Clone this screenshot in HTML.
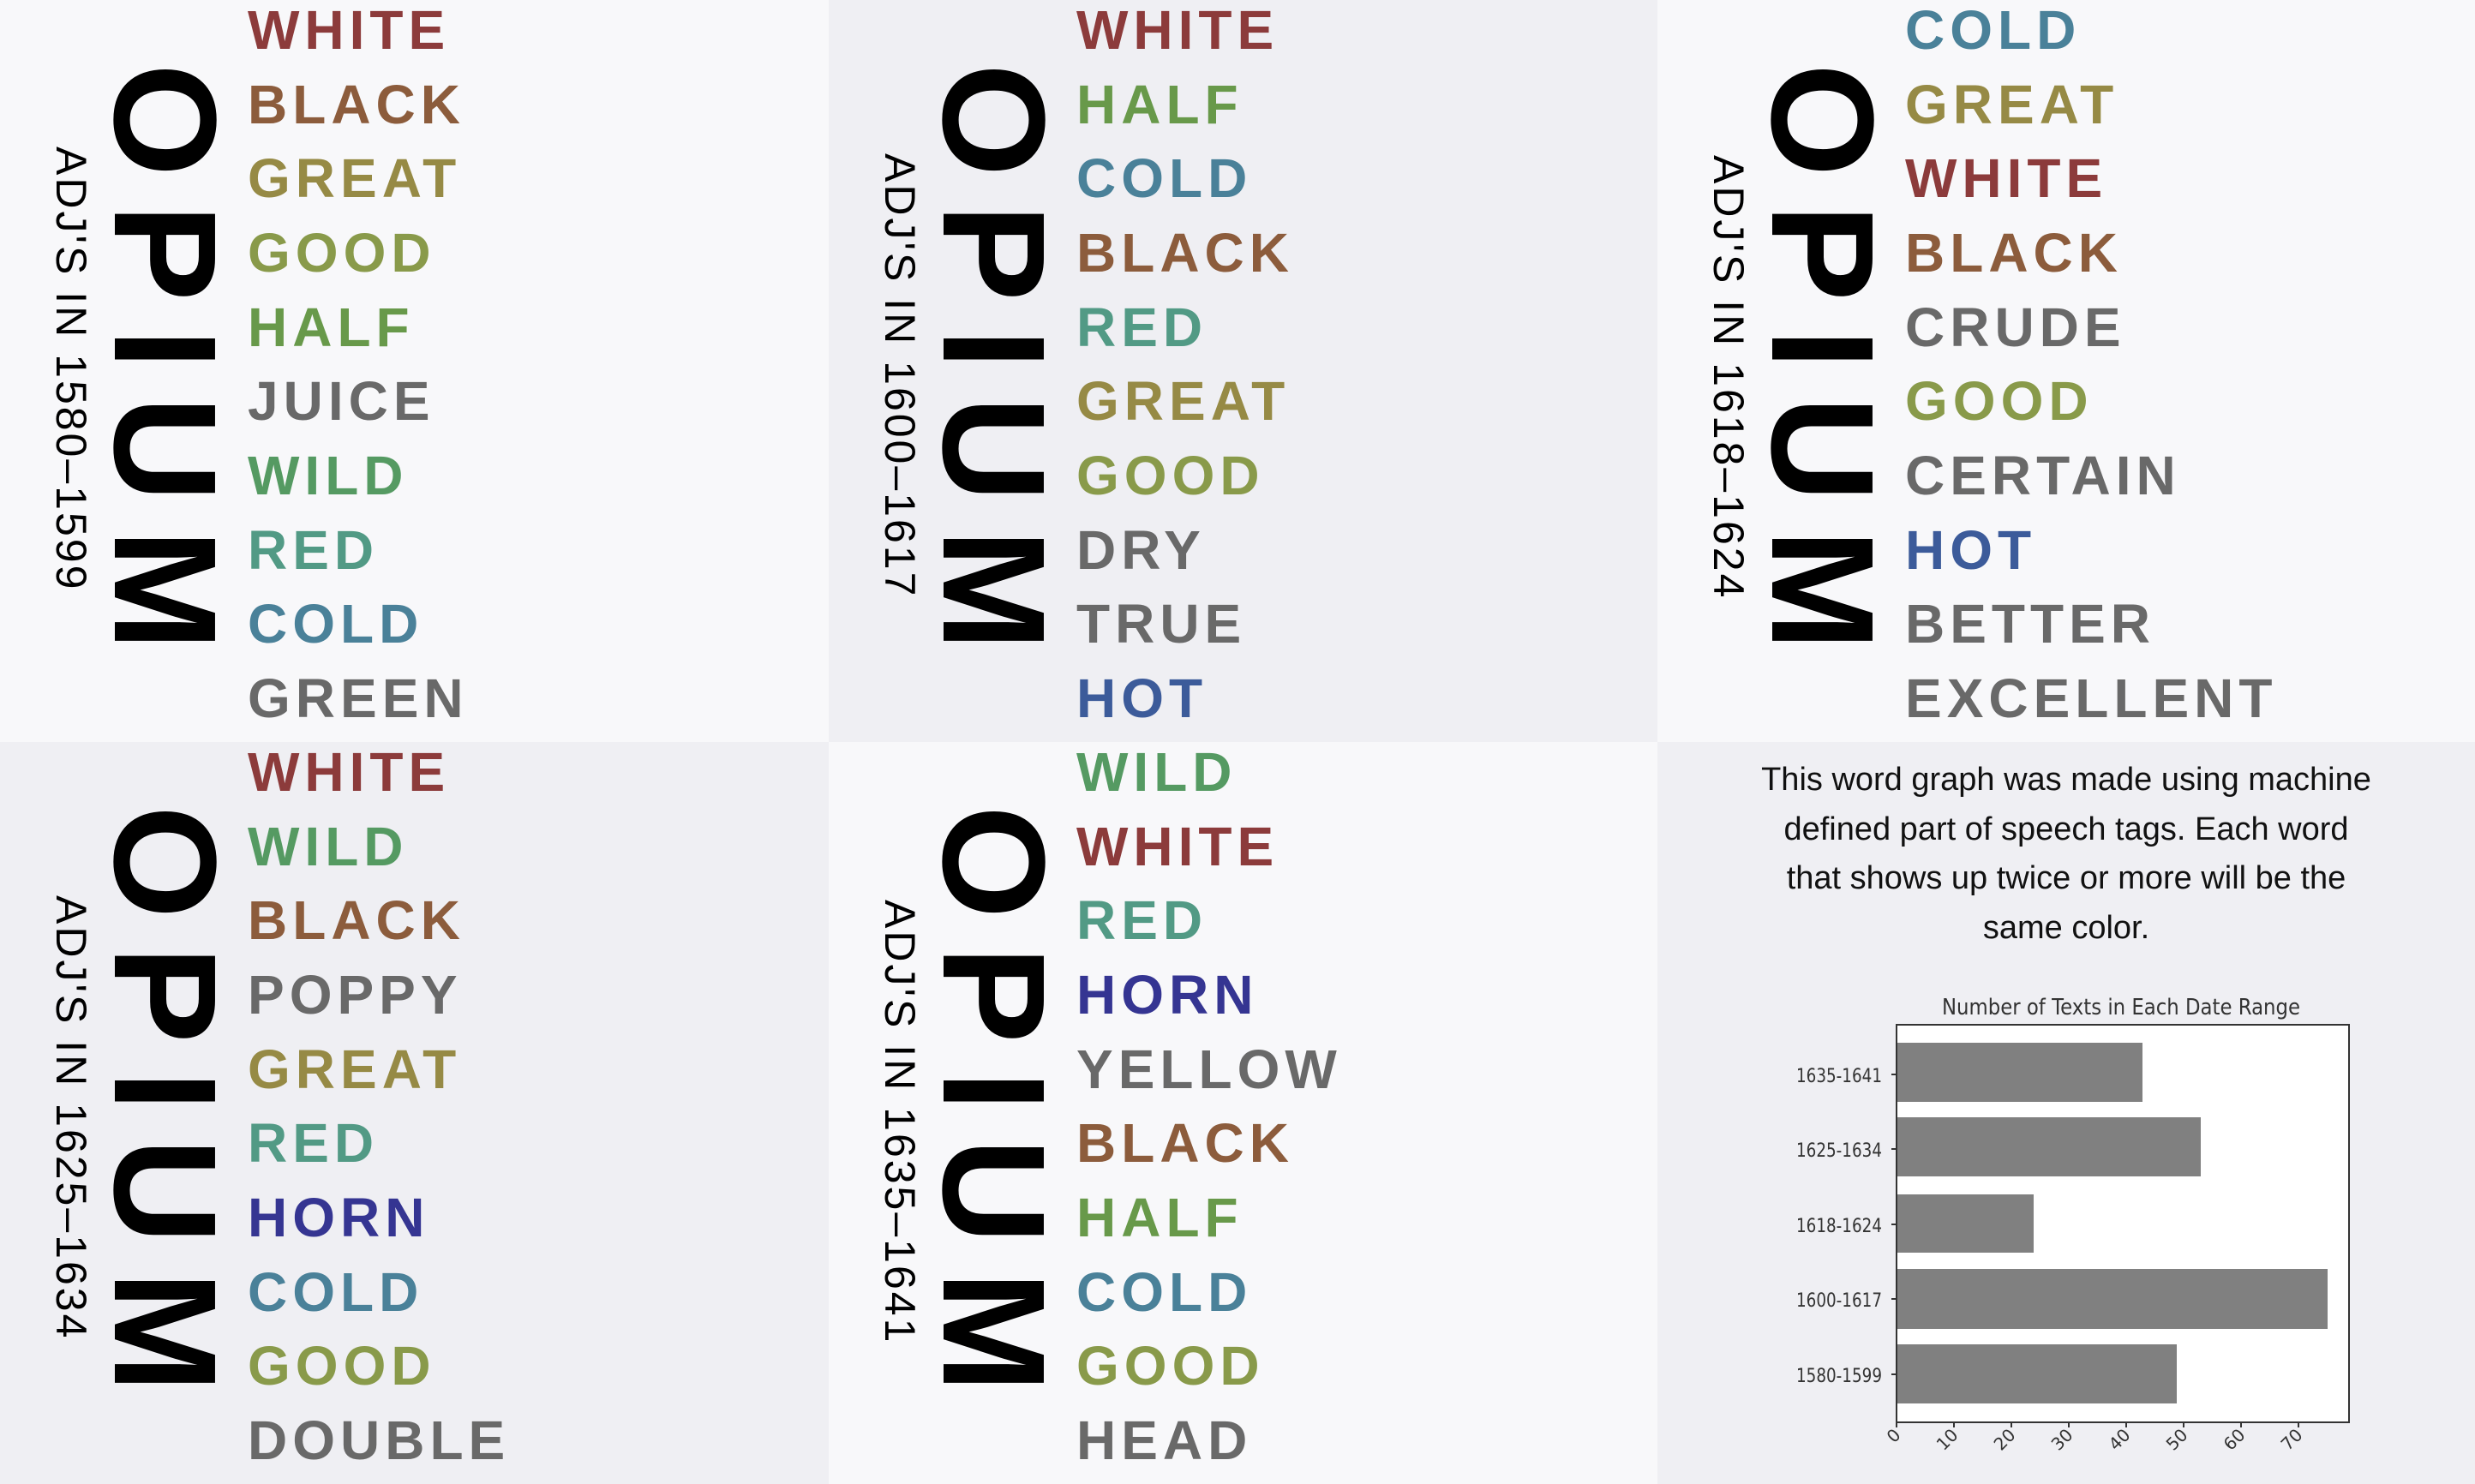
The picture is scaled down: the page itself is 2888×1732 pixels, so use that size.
<!DOCTYPE html>
<html><head><meta charset="utf-8">
<style>
*{margin:0;padding:0;box-sizing:border-box}
body{width:2888px;height:1732px;overflow:hidden;position:relative;background:#f8f8fa;font-family:"Liberation Sans",sans-serif}
.p{position:absolute;width:967px;height:866px;overflow:hidden}
.a{background:#f8f8fa}.b{background:#efeff3}
.w{position:absolute;left:289px;top:-8px;font-weight:bold;font-size:64px;line-height:86.67px;letter-spacing:6px;white-space:nowrap}
.op{position:absolute;left:277px;top:74px;transform:rotate(90deg);transform-origin:0 0;font-weight:bold;font-size:170px;line-height:170px;letter-spacing:32px;white-space:nowrap;color:#000}
.adj{position:absolute;left:108px;transform:rotate(90deg);transform-origin:0 0;font-size:50px;line-height:50px;letter-spacing:3px;white-space:nowrap;color:#000}
.r{color:#8c3b3b}.k{color:#8c5c3c}.gt{color:#968a45}.gd{color:#899a4a}.h{color:#68994a}.g{color:#696969}.wl{color:#559a62}.rd{color:#529a85}.c{color:#4a8199}.ht{color:#3c5b9a}.hn{color:#353592}
.desc{position:absolute;left:1934px;top:882px;width:954px;text-align:center;font-size:38px;line-height:57.5px;color:#111}
</style></head><body>

<div class="p a" style="left:0;top:0">
<div class="adj" style="top:171px">ADJ'S IN 1580–1599</div>
<div class="op">OPIUM</div>
<div class="w"><div class="r">WHITE</div><div class="k">BLACK</div><div class="gt">GREAT</div><div class="gd">GOOD</div><div class="h">HALF</div><div class="g">JUICE</div><div class="wl">WILD</div><div class="rd">RED</div><div class="c">COLD</div><div class="g">GREEN</div></div>
</div>

<div class="p b" style="left:967px;top:0">
<div class="adj" style="top:179px">ADJ'S IN 1600–1617</div>
<div class="op">OPIUM</div>
<div class="w"><div class="r">WHITE</div><div class="h">HALF</div><div class="c">COLD</div><div class="k">BLACK</div><div class="rd">RED</div><div class="gt">GREAT</div><div class="gd">GOOD</div><div class="g">DRY</div><div class="g">TRUE</div><div class="ht">HOT</div></div>
</div>

<div class="p a" style="left:1934px;top:0;width:954px">
<div class="adj" style="top:181px">ADJ'S IN 1618–1624</div>
<div class="op">OPIUM</div>
<div class="w"><div class="c">COLD</div><div class="gt">GREAT</div><div class="r">WHITE</div><div class="k">BLACK</div><div class="g">CRUDE</div><div class="gd">GOOD</div><div class="g">CERTAIN</div><div class="ht">HOT</div><div class="g">BETTER</div><div class="g">EXCELLENT</div></div>
</div>

<div class="p b" style="left:0;top:866px">
<div class="adj" style="top:179px">ADJ'S IN 1625–1634</div>
<div class="op">OPIUM</div>
<div class="w"><div class="r">WHITE</div><div class="wl">WILD</div><div class="k">BLACK</div><div class="g">POPPY</div><div class="gt">GREAT</div><div class="rd">RED</div><div class="hn">HORN</div><div class="c">COLD</div><div class="gd">GOOD</div><div class="g">DOUBLE</div></div>
</div>

<div class="p a" style="left:967px;top:866px">
<div class="adj" style="top:184px">ADJ'S IN 1635–1641</div>
<div class="op">OPIUM</div>
<div class="w"><div class="wl">WILD</div><div class="r">WHITE</div><div class="rd">RED</div><div class="hn">HORN</div><div class="g">YELLOW</div><div class="k">BLACK</div><div class="h">HALF</div><div class="c">COLD</div><div class="gd">GOOD</div><div class="g">HEAD</div></div>
</div>

<div class="p b" style="left:1934px;top:866px;width:954px"></div>

<div class="desc">This word graph was made using machine<br>defined part of speech tags. Each word<br>that shows up twice or more will be the<br>same color.</div>

<svg style="position:absolute;left:0;top:0" width="2888" height="1732" viewBox="0 0 2888 1732">
<g font-family="DejaVu Sans, sans-serif" fill="#333">
<text x="2475" y="1184" font-size="26" text-anchor="middle" textLength="418" lengthAdjust="spacingAndGlyphs">Number of Texts in Each Date Range</text>
</g>
<rect x="2213" y="1196" width="528" height="464" fill="#fff" stroke="#333" stroke-width="2"/>
<g fill="#808080">
<rect x="2214" y="1217" width="286" height="69"/>
<rect x="2214" y="1304" width="354" height="69"/>
<rect x="2214" y="1394" width="159" height="68"/>
<rect x="2214" y="1481" width="502" height="70"/>
<rect x="2214" y="1569" width="326" height="69"/>
</g>
<g stroke="#333" stroke-width="2">
<line x1="2207" y1="1254" x2="2213" y2="1254"/><line x1="2207" y1="1341" x2="2213" y2="1341"/><line x1="2207" y1="1429" x2="2213" y2="1429"/><line x1="2207" y1="1516" x2="2213" y2="1516"/><line x1="2207" y1="1604" x2="2213" y2="1604"/>
<line x1="2213" y1="1660" x2="2213" y2="1666"/><line x1="2280" y1="1660" x2="2280" y2="1666"/><line x1="2347" y1="1660" x2="2347" y2="1666"/><line x1="2414" y1="1660" x2="2414" y2="1666"/><line x1="2481" y1="1660" x2="2481" y2="1666"/><line x1="2548" y1="1660" x2="2548" y2="1666"/><line x1="2615" y1="1660" x2="2615" y2="1666"/><line x1="2682" y1="1660" x2="2682" y2="1666"/>
</g>
<g font-family="DejaVu Sans, sans-serif" fill="#333" font-size="22">
<text x="2196" y="1263" text-anchor="end" textLength="100" lengthAdjust="spacingAndGlyphs">1635-1641</text>
<text x="2196" y="1350" text-anchor="end" textLength="100" lengthAdjust="spacingAndGlyphs">1625-1634</text>
<text x="2196" y="1438" text-anchor="end" textLength="100" lengthAdjust="spacingAndGlyphs">1618-1624</text>
<text x="2196" y="1525" text-anchor="end" textLength="100" lengthAdjust="spacingAndGlyphs">1600-1617</text>
<text x="2196" y="1613" text-anchor="end" textLength="100" lengthAdjust="spacingAndGlyphs">1580-1599</text>
<g font-size="20" text-anchor="end">
<text transform="translate(2219,1676) rotate(-45)">0</text>
<text transform="translate(2286,1676) rotate(-45)">10</text>
<text transform="translate(2353,1676) rotate(-45)">20</text>
<text transform="translate(2420,1676) rotate(-45)">30</text>
<text transform="translate(2487,1676) rotate(-45)">40</text>
<text transform="translate(2554,1676) rotate(-45)">50</text>
<text transform="translate(2621,1676) rotate(-45)">60</text>
<text transform="translate(2688,1676) rotate(-45)">70</text>
</g>
</g>
</svg>
</body></html>
